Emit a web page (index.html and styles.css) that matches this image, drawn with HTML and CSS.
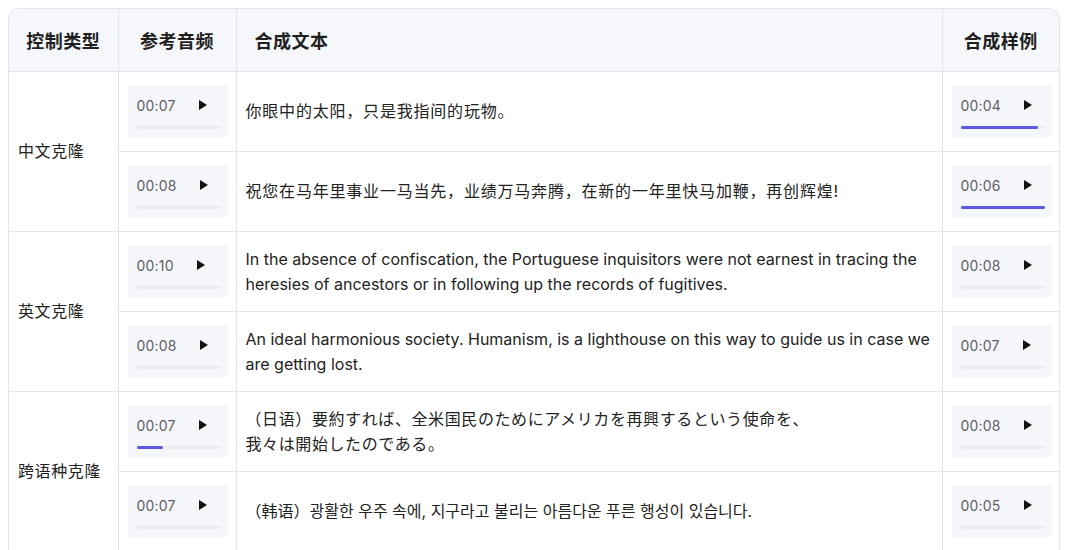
FILE: index.html
```html
<!DOCTYPE html>
<html lang="zh">
<head>
    <meta charset="UTF-8">
    <title>合成样例</title>
    <link rel="stylesheet" href="styles.css">
</head>
<body>
    <div class="table-wrap">
        <table>
            <colgroup>
                <col class="c-type">
                <col class="c-ref">
                <col class="c-text">
                <col class="c-out">
            </colgroup>
            <thead>
                <tr>
                    <th>控制类型</th>
                    <th>参考音频</th>
                    <th class="left">合成文本</th>
                    <th>合成样例</th>
                </tr>
            </thead>
            <tbody>
                <tr>
                    <td rowspan="2" class="type">中文克隆</td>
                    <td class="audio"><div class="player"><div class="top"><span class="time">00:07</span><span class="play"></span></div><div class="bar"></div></div></td>
                    <td class="text cjk">你眼中的太阳，只是我指间的玩物。</td>
                    <td class="audio"><div class="player"><div class="top"><span class="time">00:04</span><span class="play"></span></div><div class="bar"><div class="fill" style="width: 92%"></div></div></div></td>
                </tr>
                <tr>
                    <td class="audio"><div class="player"><div class="top"><span class="time">00:08</span><span class="play"></span></div><div class="bar"></div></div></td>
                    <td class="text cjk">祝您在马年里事业一马当先，业绩万马奔腾，在新的一年里快马加鞭，再创辉煌!</td>
                    <td class="audio"><div class="player"><div class="top"><span class="time">00:06</span><span class="play"></span></div><div class="bar"><div class="fill" style="width: 100%"></div></div></div></td>
                </tr>
                <tr>
                    <td rowspan="2" class="type">英文克隆</td>
                    <td class="audio"><div class="player"><div class="top"><span class="time">00:10</span><span class="play"></span></div><div class="bar"></div></div></td>
                    <td class="text">In the absence of confiscation, the Portuguese inquisitors were not earnest in tracing the heresies of ancestors or in following up the records of fugitives.</td>
                    <td class="audio"><div class="player"><div class="top"><span class="time">00:08</span><span class="play"></span></div><div class="bar"></div></div></td>
                </tr>
                <tr>
                    <td class="audio"><div class="player"><div class="top"><span class="time">00:08</span><span class="play"></span></div><div class="bar"></div></div></td>
                    <td class="text">An ideal harmonious society. Humanism, is a lighthouse on this way to guide us in case we are getting lost.</td>
                    <td class="audio"><div class="player"><div class="top"><span class="time">00:07</span><span class="play"></span></div><div class="bar"></div></div></td>
                </tr>
                <tr>
                    <td rowspan="2" class="type">跨语种克隆</td>
                    <td class="audio"><div class="player"><div class="top"><span class="time">00:07</span><span class="play"></span></div><div class="bar"><div class="fill" style="width: 32%"></div></div></div></td>
                    <td class="text jp">（日语）要約すれば、全米国民のためにアメリカを再興するという使命を、<br>我々は開始したのである。</td>
                    <td class="audio"><div class="player"><div class="top"><span class="time">00:08</span><span class="play"></span></div><div class="bar"></div></div></td>
                </tr>
                <tr>
                    <td class="audio"><div class="player"><div class="top"><span class="time">00:07</span><span class="play"></span></div><div class="bar"></div></div></td>
                    <td class="text">（韩语）광활한 우주 속에, 지구라고 불리는 아름다운 푸른 행성이 있습니다.</td>
                    <td class="audio"><div class="player"><div class="top"><span class="time">00:05</span><span class="play"></span></div><div class="bar"></div></div></td>
                </tr>
            </tbody>
        </table>
    </div>
</body>
</html>
```

FILE: styles.css
```css
body {
    margin: 0;
    padding: 8px;
    background-color: #ffffff;
    font-family: Inter, "Noto Sans CJK SC", "Noto Sans CJK KR", sans-serif;
    color: #222222;
}
.table-wrap {
    width: 1050px;
    border: 1px solid #e4e5ec;
    border-bottom: none;
    border-radius: 12px 12px 0 0;
    overflow: hidden;
}
table {
    width: 100%;
    border-collapse: collapse;
    table-layout: fixed;
}
.c-type { width: 109px; }
.c-ref { width: 118px; }
.c-text { width: 706px; }
.c-out { width: 117px; }
th, td {
    border-right: 1px solid #e4e5ec;
    border-bottom: 1px solid #e4e5ec;
    padding: 0 9px;
}
th:last-child, td:last-child {
    border-right: none;
}
th {
    height: 62px;
    background-color: #f6f7fb;
    font-size: 18px;
    font-weight: 600;
    letter-spacing: 0.5px;
    text-align: center;
    color: #1f1f1f;
}
th.left {
    text-align: left;
    padding-left: 18px;
}
td {
    height: 79px;
    vertical-align: middle;
    font-size: 16px;
    line-height: 25px;
}
td.type {
    padding-left: 9px;
    letter-spacing: 0.6px;
}
td.text {
    padding-left: 9px;
}
td.cjk {
    letter-spacing: 0.8px;
}
td.jp {
    letter-spacing: 0.6px;
}
.player {
    width: 100px;
    height: 53px;
    box-sizing: border-box;
    padding: 11px 8px 0 9px;
    background-color: #f5f6fa;
    border-radius: 5px;
}
.top {
    display: flex;
    align-items: center;
    height: 18px;
}
.time {
    font-size: 14px;
    color: #606166;
    letter-spacing: 0.2px;
}
.play {
    width: 0;
    height: 0;
    margin-left: 23px;
    border-top: 5px solid transparent;
    border-bottom: 5px solid transparent;
    border-left: 8px solid #111111;
}
.bar {
    margin-top: 12px;
    height: 3px;
    border-radius: 2px;
    background-color: #ebecf1;
    width: 84px;
}
.fill {
    height: 3px;
    border-radius: 2px;
    background-color: #5b57e0;
}
```
